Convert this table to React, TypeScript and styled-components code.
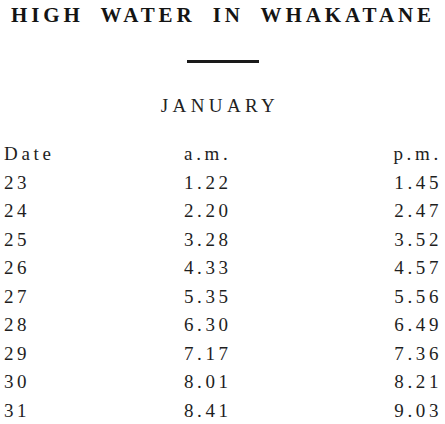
import * as React from 'react'
import styled, { createGlobalStyle } from 'styled-components'

const GlobalStyle = createGlobalStyle`
  html, body {
    margin: 0;
    padding: 0;
    background: #ffffff;
  }
  body {
    font-family: "Liberation Serif", "Times New Roman", serif;
    color: #1c1c1c;
  }
`

const tides = [
  { date: '23', am: '1.22', pm: '1.45' },
  { date: '24', am: '2.20', pm: '2.47' },
  { date: '25', am: '3.28', pm: '3.52' },
  { date: '26', am: '4.33', pm: '4.57' },
  { date: '27', am: '5.35', pm: '5.56' },
  { date: '28', am: '6.30', pm: '6.49' },
  { date: '29', am: '7.17', pm: '7.36' },
  { date: '30', am: '8.01', pm: '8.21' },
  { date: '31', am: '8.41', pm: '9.03' },
]

const Page = styled.div`
  width: 445px;
  height: 424px;
  overflow: hidden;
  padding: 0 3px 0 4px;
  box-sizing: border-box;
  display: flex;
  flex-direction: column;

  & > * {
    flex-shrink: 0;
  }
`

const Title = styled.h1`
  margin: 0;
  padding-top: 2px;
  font-size: 21px;
  line-height: 26px;
  font-weight: bold;
  letter-spacing: 3.9px;
  word-spacing: 8px;
  text-align: center;
  color: #141414;
  white-space: nowrap;
`

const Rule = styled.hr`
  width: 72px;
  height: 3px;
  margin: 32px auto 0;
  border: none;
  background: #1a1a1a;
`

const Month = styled.h2`
  margin: 32px 0 0;
  font-size: 19px;
  line-height: 22px;
  font-weight: normal;
  letter-spacing: 4.4px;
  text-align: center;
  padding-right: 6px;
  color: #222;
`

const TideTable = styled.div`
  margin-top: 23px;
  display: grid;
  grid-template-columns: 180px 1fr auto;
  grid-auto-rows: 28.5px;
  font-size: 19px;
  line-height: 28.5px;
  color: #1e1e1e;
`

const Cell = styled.div<{ $right?: boolean; $head?: boolean }>`
  letter-spacing: ${p => (p.$head ? '3.7px' : '3.6px')};
  text-align: ${p => (p.$right ? 'right' : 'left')};
  white-space: nowrap;
`

export default function App() {
  return (
    <Page>
      <GlobalStyle />
      <Title>HIGH WATER IN WHAKATANE</Title>
      <Rule />
      <Month>JANUARY</Month>
      <TideTable>
        <Cell $head>Date</Cell>
        <Cell $head>a.m.</Cell>
        <Cell $head $right>p.m.</Cell>
        {tides.map(t => (
          <React.Fragment key={t.date}>
            <Cell>{t.date}</Cell>
            <Cell>{t.am}</Cell>
            <Cell $right>{t.pm}</Cell>
          </React.Fragment>
        ))}
      </TideTable>
    </Page>
  )
}
